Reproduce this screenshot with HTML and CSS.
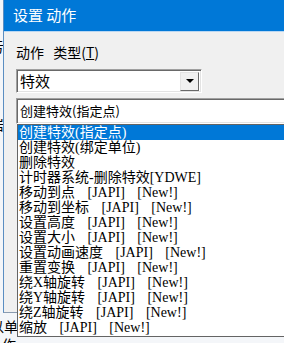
FILE: index.html
```html
<!DOCTYPE html>
<html lang="zh-CN">
<head>
<meta charset="UTF-8">
<title>设置 动作</title>
<link rel="stylesheet" href="styles.css">
</head>
<body>

<div class="backwin">
<div class="back-line back-top">亏</div>
<div class="back-line back-mid">岩</div>
<div class="back-line back-low">以单</div>
<div class="back-line back-last">作</div>
</div>

<div class="dialog">
<div class="titlebar">设置 动作</div>
<div class="dialog-body">
<div class="label">动作 <span class="label-gap"></span>类型(<u>T</u>)</div>

<div class="combo combo-small">
<span class="combo-text">特效</span>
<span class="combo-btn"><span class="arrow"></span></span>
</div>

<div class="combo combo-wide">
<span class="combo-text">创建特效(指定点)</span>
</div>
</div>
</div>

<!-- opened dropdown list, lies over the dialog -->
<ul class="droplist">
<li class="selected">创建特效(指定点)</li>
<li>创建特效(绑定单位)</li>
<li>删除特效</li>
<li>计时器系统-删除特效[YDWE]</li>
<li>移动到点 [JAPI] [New!]</li>
<li>移动到坐标 [JAPI] [New!]</li>
<li>设置高度 [JAPI] [New!]</li>
<li>设置大小 [JAPI] [New!]</li>
<li>设置动画速度 [JAPI] [New!]</li>
<li>重置变换 [JAPI] [New!]</li>
<li>绕X轴旋转 [JAPI] [New!]</li>
<li>绕Y轴旋转 [JAPI] [New!]</li>
<li>绕Z轴旋转 [JAPI] [New!]</li>
<li>缩放 [JAPI] [New!]</li>
</ul>

</body>
</html>
```

FILE: styles.css
```css
/* Windows style dialog with an opened dropdown */
body {
margin: 0;
width: 284px;
height: 343px;
overflow: hidden;
position: relative;
background-color: #ffffff;
font-family: "Noto Sans CJK SC", sans-serif;
}

.backwin {
height: 343px;
background-color: #f4f6f9;
font-size: 14px;
color: #000;
}

.back-line {
line-height: 16px;
white-space: nowrap;
margin-left: -10px;
}

.back-top {
padding-top: 38px;
}

.back-mid {
margin-top: 62px;
}

.back-low {
margin-top: 186px;
margin-left: -10px;
}

.back-last {
margin-top: 2px;
margin-left: 2px;
}

.dialog {
position: absolute;
left: 3px;
top: 0;
width: 300px;
height: 312px;
border-left: 1px solid #5b8ec2;
border-bottom: 1px solid #8a9bb0;
background-color: #f0f0f0;
}

.titlebar {
height: 32px;
background-color: #0078d7;
color: #ffffff;
font-size: 15px;
line-height: 30px;
padding-left: 9px;
border-bottom: 1px solid #b9d7f2;
box-sizing: border-box;
}

.dialog-body {
padding: 12px 0 0 12px;
}

.label {
font-size: 14px;
line-height: 17px;
color: #000;
}

.label-gap {
display: inline-block;
width: 6px;
}

.combo {
display: flex;
align-items: center;
background-color: #ffffff;
box-sizing: border-box;
border-top: 1px solid #a0a0a0;
border-left: 1px solid #a0a0a0;
border-right: 1px solid #ffffff;
border-bottom: 1px solid #ffffff;
box-shadow: inset 1px 1px 0 #696969, inset -1px -1px 0 #e3e3e3;
}

.combo-small {
margin-top: 8px;
width: 186px;
height: 24px;
}

.combo-wide {
margin-top: 5px;
width: 300px;
height: 26px;
}

.combo-text {
flex: 1;
padding-left: 3px;
font-size: 15px;
line-height: 18px;
}

.combo-wide .combo-text {
font-size: 13px;
}

.combo-btn {
width: 19px;
height: 19px;
margin-right: 2px;
display: flex;
align-items: center;
justify-content: center;
background-color: #f0f0f0;
box-sizing: border-box;
border-top: 1px solid #e3e3e3;
border-left: 1px solid #e3e3e3;
border-right: 1px solid #696969;
border-bottom: 1px solid #696969;
}

.arrow {
width: 0;
height: 0;
border-left: 4px solid transparent;
border-right: 4px solid transparent;
border-top: 4px solid #000;
}

.droplist {
position: absolute;
left: 17px;
top: 124px;
width: 300px;
margin: 0;
padding: 0 0 1px 0;
list-style: none;
background-color: #ffffff;
border: 1px solid #646464;
font-family: "Liberation Serif", "Noto Sans CJK SC", serif;
font-size: 14px;
word-spacing: 9px;
color: #000;
}

.droplist li {
height: 15px;
line-height: 15px;
padding-left: 1px;
white-space: pre;
}

.droplist .selected {
background-color: #0078d7;
color: #ffffff;
}
```
